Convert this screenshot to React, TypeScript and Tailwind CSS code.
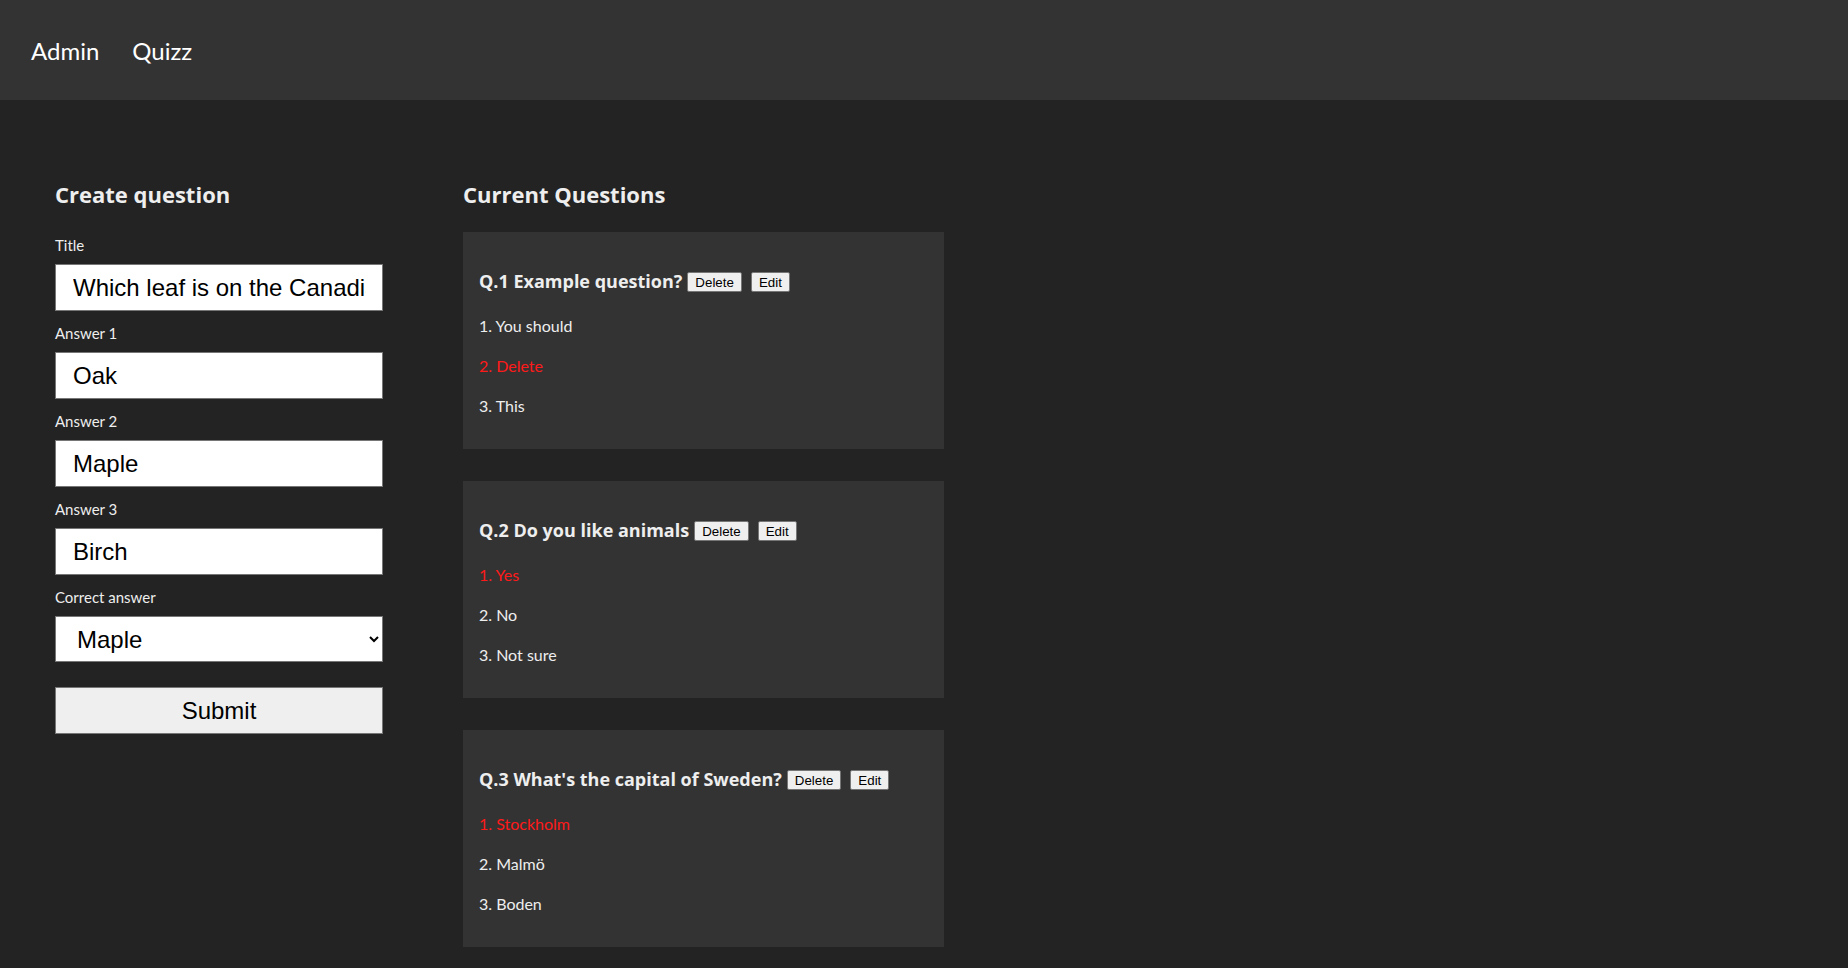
import { FC } from "react";

type Question = {
  id: number;
  title: string;
  answers: string[];
  correct: number;
};

const questions: Question[] = [
  { id: 1, title: "Example question?", answers: ["You should", "Delete", "This"], correct: 1 },
  { id: 2, title: "Do you like animals", answers: ["Yes", "No", "Not sure"], correct: 0 },
  { id: 3, title: "What's the capital of Sweden?", answers: ["Stockholm", "Malmö", "Boden"], correct: 0 },
];

const fields = [
  { label: "Title", value: "Which leaf is on the Canadian flag?" },
  { label: "Answer 1", value: "Oak" },
  { label: "Answer 2", value: "Maple" },
  { label: "Answer 3", value: "Birch" },
];

const ui = "font-['Lato','Open_Sans',sans-serif]";
const heading = "font-['Open_Sans','Lato',sans-serif]";
const native = "font-['Liberation_Sans',Arial,sans-serif]";

const QuestionCard: FC<{ q: Question }> = ({ q }) => {
  return (
    <div className="bg-[#333333] px-4 pt-[35px] pb-[31px]">
      <div className="flex items-center h-7">
        <h3 className={`${heading} text-[18px] font-bold text-[#eeeeee]`}>
          Q.{q.id} {q.title}
        </h3>
        <button
          className={`${native} ml-[5px] mt-[2px] h-5 px-[7px] text-[13.33px] text-black bg-[#efefef] border border-[#767676] rounded-[2px]`}
        >
          Delete
        </button>
        <button
          className={`${native} ml-[9px] mt-[2px] h-5 px-[7px] text-[13.33px] text-black bg-[#efefef] border border-[#767676] rounded-[2px]`}
        >
          Edit
        </button>
      </div>
      <div className="mt-[19px] flex flex-col gap-4">
        {q.answers.map((a, i) => (
          <p
            key={a}
            className={`h-6 leading-6 text-[16px] ${
              i === q.correct ? "text-[#ff1a1a]" : "text-[#eeeeee]"
            }`}
          >
            {i + 1}. {a}
          </p>
        ))}
      </div>
    </div>
  );
};

const App: FC = () => {
  return (
    <div className={`${ui} min-h-screen bg-[#232323]`}>
      <nav className="h-[100px] bg-[#333333] flex items-center pl-[31px] pt-[2px] gap-[33px] text-[24px] text-white">
        <a>Admin</a>
        <a>Quizz</a>
      </nav>
      <main className="flex pl-[55px] pt-[78px] gap-[80px]">
        <section className="w-[328px] flex flex-col">
          <h2 className={`${heading} h-8 leading-8 text-[22px] font-bold text-[#eeeeee]`}>Create question</h2>
          <div className="mt-[25px] flex flex-col gap-3">
            {fields.map((f) => (
              <label key={f.label} className="flex flex-col gap-[9px]">
                <span className="h-5 leading-5 text-[15px] text-[#eeeeee]">{f.label}</span>
                <input
                  readOnly
                  defaultValue={f.value}
                  className={`${native} h-[47px] w-full pl-[17px] pr-4 text-[24px] text-black bg-white border border-[#767676] outline-none`}
                />
              </label>
            ))}
            <label className="flex flex-col gap-[9px]">
              <span className="h-5 leading-5 text-[15px] text-[#eeeeee]">Correct answer</span>
              <select
                defaultValue="Maple"
                className={`${native} h-[46px] w-full pl-[17px] pr-4 text-[24px] text-black bg-white border border-[#767676]`}
              >
                <option>Oak</option>
                <option>Maple</option>
                <option>Birch</option>
              </select>
            </label>
          </div>
          <button
            className={`${native} mt-[25px] h-[47px] w-full text-[24px] text-black bg-[#efefef] border border-[#767676]`}
          >
            Submit
          </button>
        </section>
        <section className="w-[481px] flex flex-col">
          <h2 className={`${heading} h-8 leading-8 text-[22px] font-bold text-[#eeeeee]`}>Current Questions</h2>
          <div className="mt-[22px] flex flex-col gap-8 pb-8">
            {questions.map((q) => (
              <QuestionCard key={q.id} q={q} />
            ))}
          </div>
        </section>
      </main>
    </div>
  );
};

export default App;
